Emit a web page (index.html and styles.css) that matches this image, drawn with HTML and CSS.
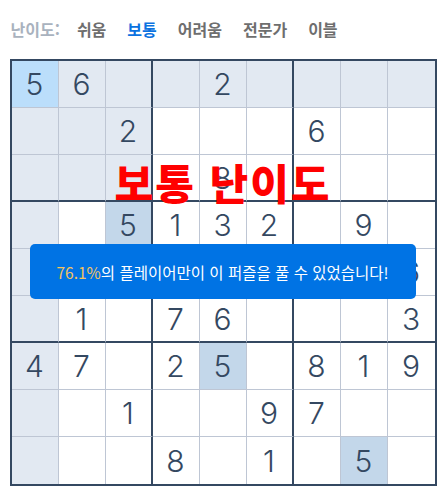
FILE: index.html
```html
<!DOCTYPE html>
<html lang="ko">
<head>
    <meta charset="UTF-8">
    <meta name="viewport" content="width=device-width, initial-scale=1.0">
    <title>스도쿠</title>
    <link rel="stylesheet" href="styles.css">
</head>
<body>
    <div class="game">
        <div class="difficulty">
            <span class="difficulty-label">난이도:</span>
            <a class="level">쉬움</a>
            <a class="level active">보통</a>
            <a class="level">어려움</a>
            <a class="level">전문가</a>
            <a class="level">이블</a>
        </div>
        <div class="board-wrap">
            <div class="board" id="board"></div>
            <div class="banner">보통 난이도</div>
            <div class="toast"><span class="rate">76.1%</span>의 플레이어만이 이 퍼즐을 풀 수 있었습니다!</div>
        </div>
    </div>

    <script>
        // Puzzle state (0 = empty)
        const puzzle = [
            [5, 6, 0, 0, 2, 0, 0, 0, 0],
            [0, 0, 2, 0, 0, 0, 6, 0, 0],
            [0, 0, 0, 0, 8, 0, 0, 0, 0],
            [0, 0, 5, 1, 3, 2, 0, 9, 0],
            [0, 0, 0, 0, 0, 0, 0, 0, 6],
            [0, 1, 0, 7, 6, 0, 0, 0, 3],
            [4, 7, 0, 2, 5, 0, 8, 1, 9],
            [0, 0, 1, 0, 0, 9, 7, 0, 0],
            [0, 0, 0, 8, 0, 1, 0, 5, 0]
        ];
        const selected = { row: 0, col: 0 };

        function renderBoard() {
            const board = document.getElementById("board");
            const selValue = puzzle[selected.row][selected.col];
            board.innerHTML = "";
            puzzle.forEach((line, r) => {
                line.forEach((value, c) => {
                    const cell = document.createElement("div");
                    cell.classList.add("cell");
                    if (c === 2 || c === 5) cell.classList.add("box-right");
                    if (c === 8) cell.classList.add("last-col");
                    if (r === 2 || r === 5) cell.classList.add("box-bottom");
                    if (r === 8) cell.classList.add("last-row");

                    const sameBox = Math.floor(r / 3) === Math.floor(selected.row / 3) &&
                        Math.floor(c / 3) === Math.floor(selected.col / 3);
                    if (r === selected.row && c === selected.col) {
                        cell.classList.add("selected");
                    } else if (value && value === selValue) {
                        cell.classList.add("same");
                    } else if (r === selected.row || c === selected.col || sameBox) {
                        cell.classList.add("related");
                    }
                    cell.textContent = value || "";
                    board.appendChild(cell);
                });
            });
        }

        renderBoard();
    </script>
</body>
</html>
```

FILE: styles.css
```css
/* General */
body {
    margin: 0;
    padding: 0;
    background-color: #fff;
    font-family: "Noto Sans CJK KR", "Noto Sans", sans-serif;
}
.game {
    width: 427px;
    margin: 0 auto;
}

/* Difficulty bar */
.difficulty {
    display: flex;
    align-items: center;
    height: 57px;
    padding-bottom: 2px;
    padding-left: 1px;
    font-size: 16px;
    font-weight: 700;
}
.difficulty-label {
    color: #a9b2be;
    margin-right: 17px;
}
.level {
    color: #6e6e6e;
    margin-right: 21px;
    cursor: pointer;
}
.level.active {
    color: #0b72e0;
}

/* Board */
.board-wrap {
    position: relative;
}
.board {
    display: grid;
    grid-template-columns: repeat(9, 47px);
    grid-auto-rows: 47px;
    border: 2px solid #344861;
}
.cell {
    box-sizing: border-box;
    display: flex;
    align-items: center;
    justify-content: center;
    border-right: 1px solid #bec6d4;
    border-bottom: 1px solid #bec6d4;
    background-color: #fff;
    color: #344861;
    font-family: Inter, "Liberation Sans", sans-serif;
    font-size: 30px;
    font-weight: 300;
}
.cell.box-right {
    border-right: 2px solid #344861;
}
.cell.box-bottom {
    border-bottom: 2px solid #344861;
}
.cell.last-col {
    border-right: none;
}
.cell.last-row {
    border-bottom: none;
}
.cell.related {
    background-color: #e2e9f2;
}
.cell.same {
    background-color: #c3d7ea;
}
.cell.selected {
    background-color: #bbdefb;
}

/* Overlays */
.banner {
    position: absolute;
    top: 105px;
    left: 0;
    right: 0;
    text-align: center;
    color: #ff0000;
    font-size: 42px;
    font-weight: 900;
    line-height: 36px;
    letter-spacing: 2px;
}
.toast {
    position: absolute;
    top: 185px;
    left: 20px;
    width: 386px;
    height: 55px;
    display: flex;
    align-items: center;
    justify-content: center;
    border-radius: 5px;
    background-color: #0073e4;
    color: #fff;
    font-size: 15.5px;
}
.rate {
    color: #f5c45e;
}
```
